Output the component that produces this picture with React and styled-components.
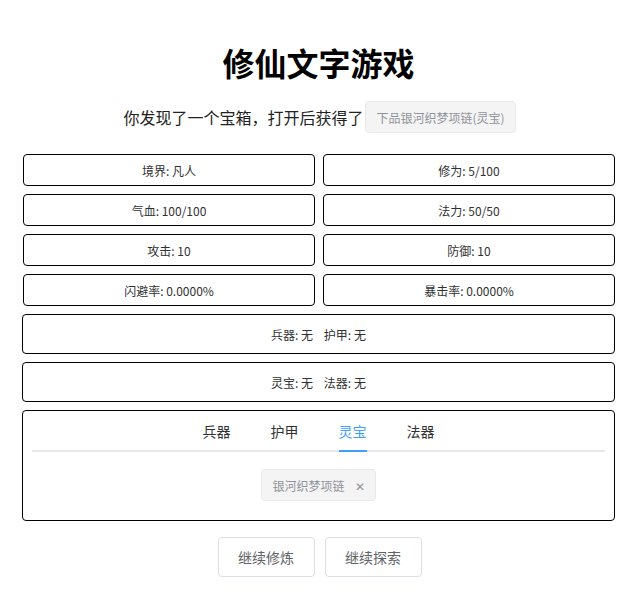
import React from "react";
import styled, { createGlobalStyle } from "styled-components";

const Global = createGlobalStyle`
  html, body { margin: 0; padding: 0; background: #fff; }
  body { font-family: "Noto Sans CJK SC", "Noto Sans", sans-serif; color: #303133; }
  * { box-sizing: border-box; }
`;

const Page = styled.div`
  padding: 42px 20px 20px 22px;
  display: flex;
  flex-direction: column;
`;

const Title = styled.h1`
  margin: 0;
  font-size: 32px;
  line-height: 40px;
  font-weight: 700;
  color: #000;
  text-align: center;
`;

const Notice = styled.div`
  margin-top: 19px;
  height: 32px;
  display: flex;
  align-items: center;
  justify-content: center;
  gap: 2px;
  padding-left: 2px;
  font-size: 16px;
  color: #222;
`;

const Tag = styled.span`
  display: inline-flex;
  align-items: center;
  gap: 10px;
  height: 32px;
  padding: 0 10px;
  font-size: 12px;
  color: #909399;
  background: #f4f4f5;
  border: 1px solid #e9e9eb;
  border-radius: 4px;
`;

const Close = styled.span`
  font-size: 12px;
  color: #909399;
`;

const StatGrid = styled.div`
  margin-top: 21px;
  margin-left: 1px;
  display: grid;
  grid-template-columns: 1fr 1fr;
  gap: 8px;
`;

const Box = styled.div`
  height: ${(p) => p.$h || 32}px;
  border: 1px solid #000;
  border-radius: 4px;
  display: flex;
  align-items: center;
  justify-content: center;
  font-size: 12px;
  color: #303133;
  white-space: pre;
`;

const Wide = styled(Box)`
  margin-top: 8px;
`;

const Panel = styled.div`
  margin-top: 8px;
  border: 1px solid #000;
  border-radius: 4px;
  padding: 9px 9px 9px;
  display: flex;
  flex-direction: column;
`;

const TabBar = styled.div`
  display: flex;
  justify-content: center;
  border-bottom: 2px solid #e4e7ed;
`;

const Tab = styled.div`
  position: relative;
  height: 30px;
  line-height: 22px;
  padding: 0 20px;
  font-size: 14px;
  color: ${(p) => (p.$active ? "#409eff" : "#303133")};
  &::after {
    content: "";
    display: ${(p) => (p.$active ? "block" : "none")};
    position: absolute;
    left: 20px;
    right: 20px;
    bottom: -2px;
    height: 2px;
    background: #409eff;
  }
`;

const TabBody = styled.div`
  padding: 17px 0 10px;
  display: flex;
  justify-content: center;
`;

const Actions = styled.div`
  margin-top: 16px;
  display: flex;
  justify-content: center;
  gap: 10px;
  padding-left: 2px;
`;

const Button = styled.button`
  width: 97px;
  height: 40px;
  background: #fff;
  border: 1px solid #dcdfe6;
  border-radius: 4px;
  font-family: inherit;
  font-size: 14px;
  color: #606266;
  cursor: pointer;
`;

const stats = [
  "境界: 凡人",
  "修为: 5/100",
  "气血: 100/100",
  "法力: 50/50",
  "攻击: 10",
  "防御: 10",
  "闪避率: 0.0000%",
  "暴击率: 0.0000%",
];

const tabs = ["兵器", "护甲", "灵宝", "法器"];

export default function App() {
  return (
    <>
      <Global />
      <Page>
        <Title>修仙文字游戏</Title>
        <Notice>
          <span>你发现了一个宝箱，打开后获得了</span>
          <Tag>下品银河织梦项链(灵宝)</Tag>
        </Notice>
        <StatGrid>
          {stats.map((s) => (
            <Box key={s}>{s}</Box>
          ))}
        </StatGrid>
        <Wide $h={40}>{"兵器: 无    护甲: 无"}</Wide>
        <Wide $h={40}>{"灵宝: 无    法器: 无"}</Wide>
        <Panel>
          <TabBar>
            {tabs.map((t) => (
              <Tab key={t} $active={t === "灵宝"}>
                {t}
              </Tab>
            ))}
          </TabBar>
          <TabBody>
            <Tag>
              银河织梦项链
              <Close>✕</Close>
            </Tag>
          </TabBody>
        </Panel>
        <Actions>
          <Button>继续修炼</Button>
          <Button>继续探索</Button>
        </Actions>
      </Page>
    </>
  );
}
